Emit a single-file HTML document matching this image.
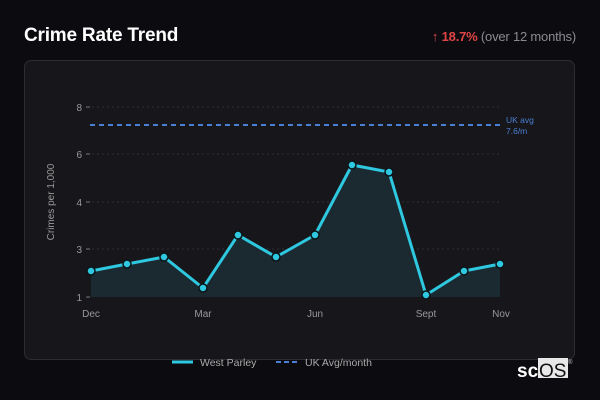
<!DOCTYPE html>
<html><head><meta charset="utf-8"><style>
html,body{margin:0;padding:0;width:600px;height:400px;background:#0c0c10;overflow:hidden;font-family:"Liberation Sans",sans-serif;}
.t{position:absolute;left:24px;top:25px;color:#fff;font-weight:bold;font-size:19px;letter-spacing:-0.2px}
.r{position:absolute;right:24px;top:29px;font-size:13px;color:#8a8a90;letter-spacing:-0.2px}
.r b{color:#e04545}
.card{position:absolute;left:24px;top:60px;width:551px;height:300px;background:#17171b;border:1px solid #2c2c32;border-radius:7px;box-sizing:border-box}
svg{position:absolute;left:0;top:0}
</style></head><body>
<div class="t">Crime Rate Trend</div>
<div class="r"><span style="color:#e04545">↑</span> <b>18.7%</b> (over 12 months)</div>
<div class="card"></div>
<svg width="600" height="400" font-family="Liberation Sans, sans-serif">
<g stroke="#2e2e34" stroke-dasharray="2,3" stroke-width="1">
<line x1="92" y1="107" x2="500" y2="107"/><line x1="92" y1="154" x2="500" y2="154"/>
<line x1="92" y1="202" x2="500" y2="202"/><line x1="92" y1="249" x2="500" y2="249"/>
</g>
<g stroke="#777" stroke-width="1"><line x1="86" y1="107" x2="90" y2="107"/><line x1="86" y1="154" x2="90" y2="154"/><line x1="86" y1="202" x2="90" y2="202"/><line x1="86" y1="249" x2="90" y2="249"/><line x1="86" y1="297" x2="90" y2="297"/></g>
<g fill="#999" font-size="10" text-anchor="end"><text x="82" y="111">8</text><text x="82" y="158">6</text><text x="82" y="206">4</text><text x="82" y="253">3</text><text x="82" y="301">1</text></g>
<text x="54" y="202" fill="#999" font-size="10" text-anchor="middle" transform="rotate(-90 54 202)">Crimes per 1,000</text>
<line x1="90" y1="125" x2="500" y2="125" stroke="#4a7fd4" stroke-width="2" stroke-dasharray="5,4"/>
<text x="506" y="123" fill="#4a7fd4" font-size="8.5">UK avg</text><text x="506" y="134" fill="#4a7fd4" font-size="8.5">7.6/m</text>
<polygon fill="#1b2a30" points="91,297 91,271 127,264 164,257 203,288 238,235 276,257 315,235 352,165 389,172 426,295 464,271 500,264 500,297"/>
<polyline fill="none" stroke="#2ec8e0" stroke-width="3" stroke-linejoin="round" points="91,271 127,264 164,257 203,288 238,235 276,257 315,235 352,165 389,172 426,295 464,271 500,264"/>
<g fill="#2ec8e0" stroke="#0c1418" stroke-width="1.5">
<circle cx="91" cy="271" r="4"/><circle cx="127" cy="264" r="4"/><circle cx="164" cy="257" r="4"/><circle cx="203" cy="288" r="4"/><circle cx="238" cy="235" r="4"/><circle cx="276" cy="257" r="4"/><circle cx="315" cy="235" r="4"/><circle cx="352" cy="165" r="4"/><circle cx="389" cy="172" r="4"/><circle cx="426" cy="295" r="4"/><circle cx="464" cy="271" r="4"/><circle cx="500" cy="264" r="4"/>
</g>
<g fill="#999" font-size="10" text-anchor="middle"><text x="91" y="317">Dec</text><text x="203" y="317">Mar</text><text x="315" y="317">Jun</text><text x="426" y="317">Sept</text><text x="501" y="317">Nov</text></g>
<line x1="172" y1="362" x2="193" y2="362" stroke="#2ec8e0" stroke-width="3"/>
<text x="200" y="366" fill="#aaa" font-size="10.5">West Parley</text>
<line x1="276" y1="362" x2="298" y2="362" stroke="#4a7fd4" stroke-width="2" stroke-dasharray="5,3"/>
<text x="305" y="366" fill="#aaa" font-size="10.5">UK Avg/month</text>
<rect x="538" y="358" width="30" height="20" fill="#e8e8e8"/>
<text x="517" y="377" fill="#fff" font-size="19" font-weight="bold">sc</text>
<text x="539" y="377" fill="#111" font-size="19">OS</text>
<text x="568" y="364" fill="#ccc" font-size="6">®</text>
</svg>
</body></html>
